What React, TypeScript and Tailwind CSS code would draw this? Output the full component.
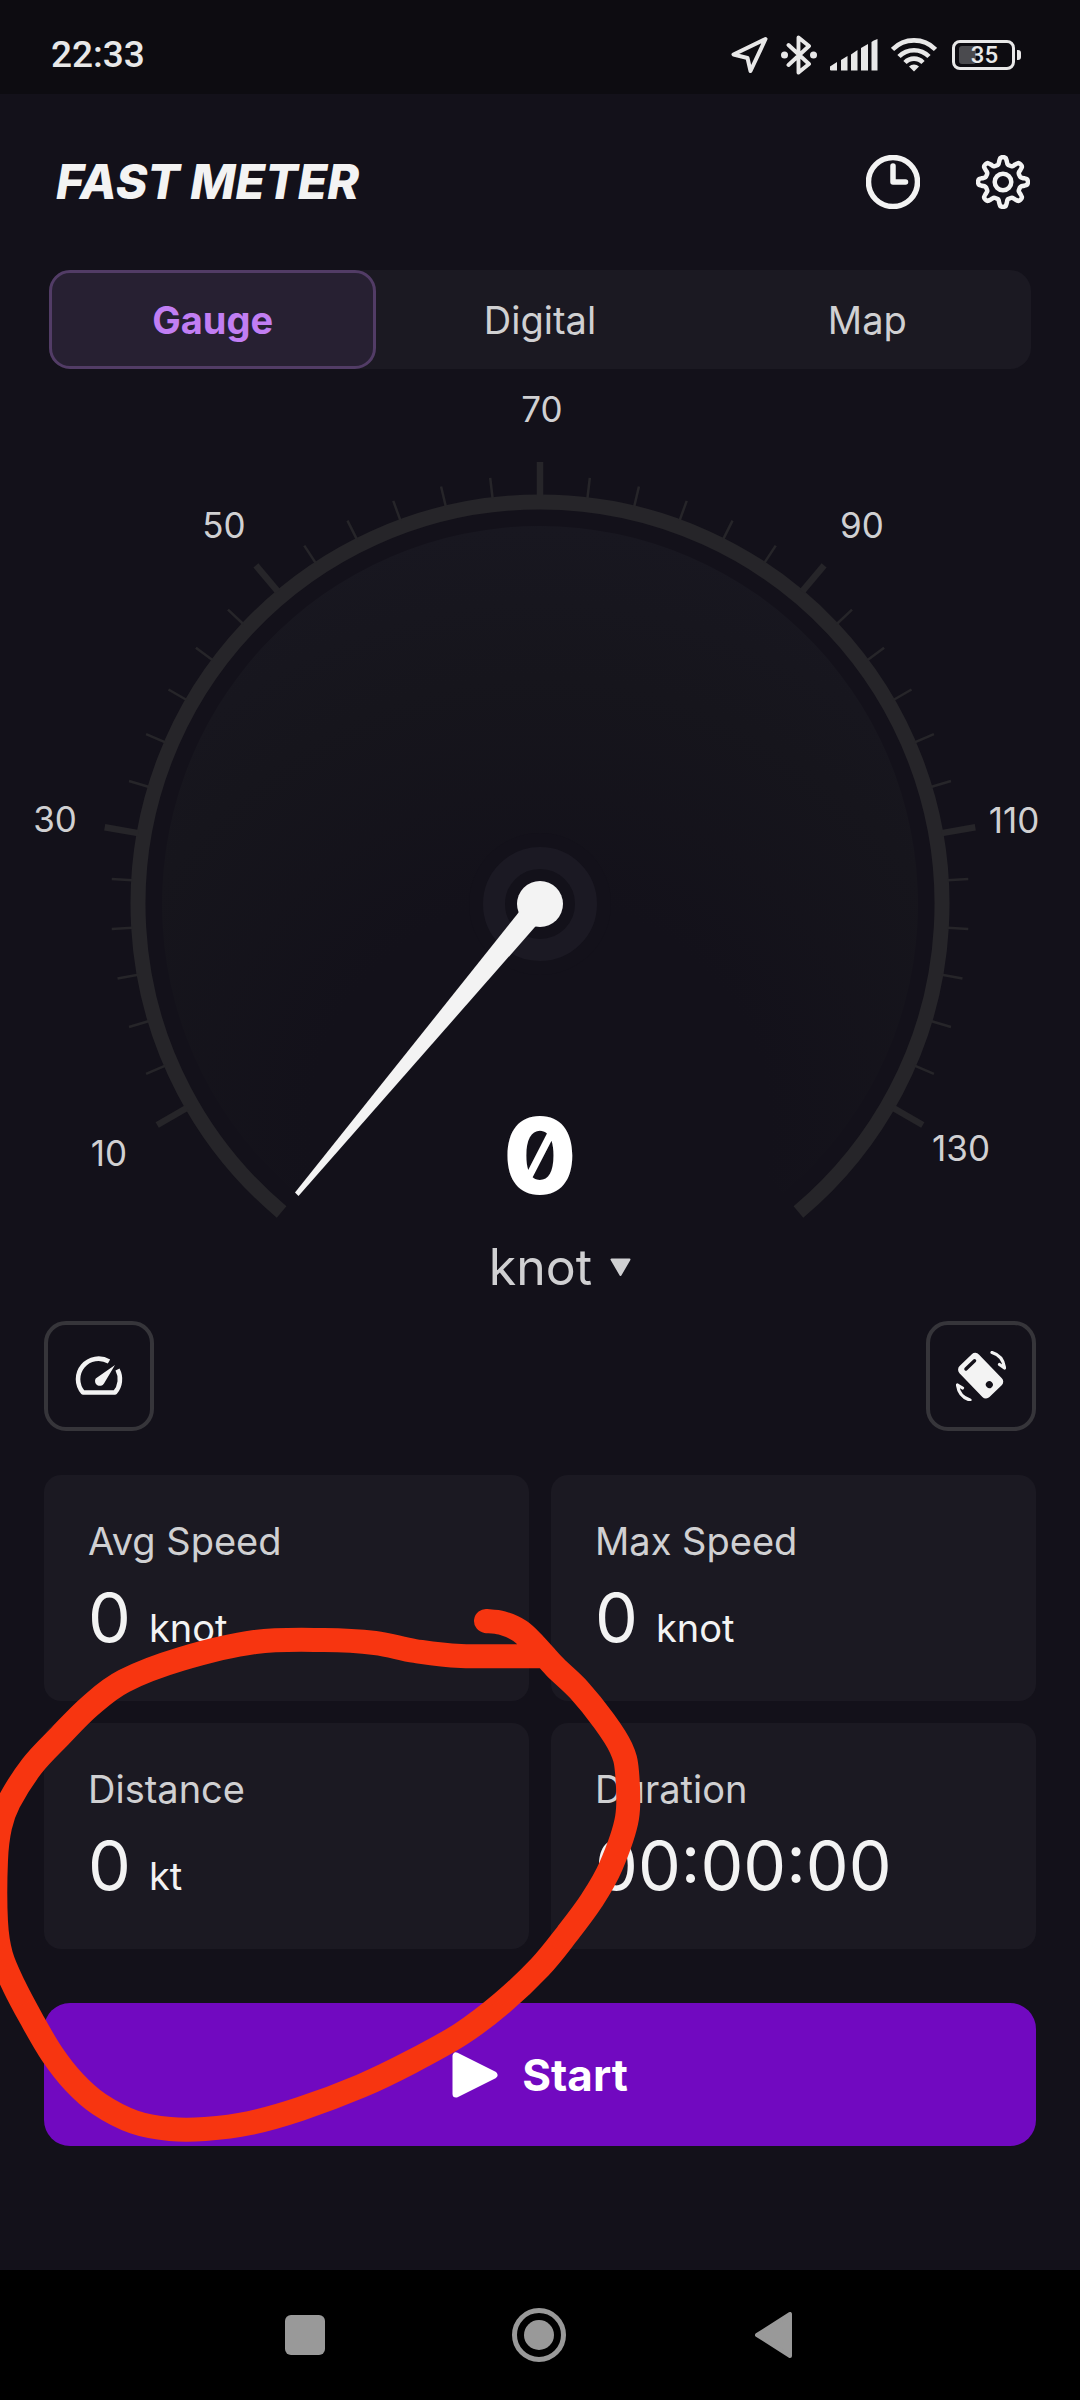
import React from "react";

const FONT = "font-['Inter',sans-serif]";

const CX = 540;
const CY = 904;

function polar(angle: number, radius: number) {
  const a = (angle * Math.PI) / 180;
  return { x: CX + radius * Math.sin(a), y: CY - radius * Math.cos(a) };
}

function arcPath(radius: number, from: number, to: number) {
  const a = polar(from, radius);
  const b = polar(to, radius);
  return `M${a.x} ${a.y}A${radius} ${radius} 0 1 1 ${b.x} ${b.y}`;
}

/* Smooth curve through a list of points. */
function smooth(points: number[][]) {
  let d = `M${points[0][0]} ${points[0][1]}`;
  for (let i = 0; i < points.length - 1; i++) {
    const p0 = points[Math.max(0, i - 1)];
    const p1 = points[i];
    const p2 = points[i + 1];
    const p3 = points[Math.min(points.length - 1, i + 2)];
    d += `C${p1[0] + (p2[0] - p0[0]) / 6} ${p1[1] + (p2[1] - p0[1]) / 6} ${p2[0] - (p3[0] - p1[0]) / 6} ${p2[1] - (p3[1] - p1[1]) / 6} ${p2[0]} ${p2[1]}`;
  }
  return d;
}

const TICKS = Array.from({ length: 37 }, (_, i) => ({
  angle: -120 + (i * 20) / 3,
  major: i % 6 === 0,
}));

const LABELS = [
  { text: "10", x: 109, y: 1166 },
  { text: "30", x: 55, y: 832 },
  { text: "50", x: 224, y: 538 },
  { text: "70", x: 542, y: 422 },
  { text: "90", x: 862, y: 538 },
  { text: "110", x: 1014, y: 833 },
  { text: "130", x: 961, y: 1161 },
];

const MARKER = [
  [486, 1621], [502, 1623], [520, 1631], [535, 1645], [555, 1667], [579, 1690],
  [604, 1721], [621, 1748], [627, 1772], [627, 1818], [611, 1866], [592, 1900],
  [567, 1934], [540, 1967], [502, 2003], [461, 2034], [411, 2062], [361, 2086],
  [300, 2109], [250, 2123], [205, 2129], [170, 2129], [134, 2122], [99, 2104],
  [74, 2082], [52, 2054], [32, 2020], [14, 1986], [1, 1955], [-4, 1922], [-4, 1860],
  [0, 1827], [9, 1802], [32, 1766], [60, 1736], [90, 1706], [124, 1681], [181, 1659],
  [255, 1642], [324, 1640], [375, 1643], [415, 1651], [461, 1656], [545, 1656],
];

function StatusBar() {
  return (
    <div className="flex h-[94px] items-center justify-between bg-[#0d0c11] pr-[59px] pl-[51px] pt-[15px]">
      <span className="font-['Roboto',sans-serif] text-[37px] leading-none font-medium text-[#e8e8e8]">22:33</span>
      <div className="flex items-center gap-[13px] text-[#e8e8e8]">
        <svg className="h-[38px] w-[37px]" viewBox="0 0 37 38" fill="none" stroke="currentColor" strokeWidth="4" strokeLinejoin="round" aria-label="Location">
          <path d="M34.500 3 2.500 18.500 16.500 22 19.500 35Z" />
        </svg>
        <svg className="h-[40px] w-[36px]" viewBox="0 0 36 40" fill="none" stroke="currentColor" strokeWidth="3.900" strokeLinecap="round" strokeLinejoin="round" aria-label="Bluetooth">
          <path d="M7.500 10 28 29 17.500 37.500V2.500L28 11 7.500 30" />
          <circle cx="3.500" cy="20" r="3.500" fill="currentColor" stroke="none" />
          <circle cx="32.500" cy="20" r="3.500" fill="currentColor" stroke="none" />
        </svg>
        <svg className="h-[32px] w-[48px]" viewBox="0 0 48 32" fill="currentColor" aria-label="Signal">
          <path d="M0 31v-3.500L7 23v8.500H1ZM11 31.500V21L17.500 17v14.500ZM21 31.500V15.500L27.500 11v20.500ZM31 31.500V9L38 5v26.500ZM41.500 31.500V3Q43 1.500 47.500 0v31.500Z" />
        </svg>
        <svg className="h-[34px] w-[46px]" viewBox="0 0 46 34" fill="none" stroke="currentColor" strokeWidth="4.600" aria-label="Wi-Fi">
          <path d="M1.500 11.500a30 30 0 0 1 43 0M8 18.500a21 21 0 0 1 30 0M14 24.500a12.500 12.500 0 0 1 18 0" />
          <path d="M18 28.500a7.500 7.500 0 0 1 10 0l-5 5Z" fill="currentColor" stroke="none" />
        </svg>
        <div className="ml-0.5 flex items-center gap-0.5">
          <div className="relative flex h-[30px] w-[63px] items-center justify-center rounded-[8px] border-[3px] border-current">
            <span className="absolute inset-y-[3px] left-1 w-[17px] rounded-[3px] bg-[#4a4a4e]" />
            <span className="relative pl-0.5 font-['Roboto',sans-serif] text-[24px] leading-none font-medium">35</span>
          </div>
          <span className="h-[10px] w-1 rounded-r-[3px] bg-current" />
        </div>
      </div>
    </div>
  );
}

function Header() {
  return (
    <header className="flex h-[176px] items-center justify-between pr-[50px] pl-[56px] text-[#f3f3f3]">
      <h1 className="text-[48px] leading-none font-extrabold italic">FAST METER</h1>
      <div className="flex items-center gap-[56px]">
        <button aria-label="History">
          <svg className="size-[54px]" viewBox="0 0 54 54" fill="none" stroke="currentColor" strokeWidth="5.500" strokeLinecap="round" strokeLinejoin="round">
            <circle cx="27" cy="27" r="24.500" />
            <path d="M27 11v16h12.500" />
          </svg>
        </button>
        <button aria-label="Settings">
          <svg className="size-[54px]" viewBox="0 0 54 54" fill="none" stroke="currentColor" strokeWidth="4.500" strokeLinejoin="round">
            <circle cx="27" cy="27" r="8.300" />
            <path d={GEAR} />
          </svg>
        </button>
      </div>
    </header>
  );
}

/* Eight-tooth gear outline, generated around (27, 27). */
const GEAR = (() => {
  const pts: number[][] = [];
  for (let i = 0; i <= 96; i++) {
    const t = (i / 96) * Math.PI * 2;
    const wave = Math.cos(8 * t);
    const r = 21.300 + 3.700 * Math.tanh(2 * wave);
    const skew = t - 0.020 * Math.sin(8 * t);
    pts.push([27 + r * Math.sin(skew), 27 - r * Math.cos(skew)]);
  }
  return smooth(pts) + "Z";
})();

function Tabs() {
  return (
    <nav className="mx-[49px] grid h-[99px] grid-cols-3 rounded-[21px] bg-[#1b1922] text-[38px] leading-none text-[#d0d0d2]">
      <button className="rounded-[21px] border-[3px] border-[#523c66] bg-[#272032] font-bold text-[#c17ef3]">Gauge</button>
      <button>Digital</button>
      <button>Map</button>
    </nav>
  );
}

function Gauge() {
  const left = polar(-140, 378);
  return (
    <svg className="block w-full" viewBox="0 369 1080 856" role="img" aria-label="Speed gauge">
      <defs>
        <radialGradient id="dial" gradientUnits="userSpaceOnUse" cx="540" cy="1130" r="604">
          <stop offset="0.38" stopColor="#13111a" />
          <stop offset="0.75" stopColor="#16151c" />
          <stop offset="1" stopColor="#181720" />
        </radialGradient>
      </defs>
      <path d={`${arcPath(378, -140, 140)}L${CX} ${CY}L${left.x} ${left.y}Z`} fill="url(#dial)" />
      <path d={arcPath(402, -140, 140)} fill="none" stroke="#262529" strokeWidth="15" />
      {TICKS.map((t) => {
        const a = polar(t.angle, 408);
        const b = polar(t.angle, t.major ? 442 : 429);
        return <line key={t.angle} x1={a.x} y1={a.y} x2={b.x} y2={b.y} stroke="#262529" strokeWidth={t.major ? 6.500 : 2.500} />;
      })}
      <g className="fill-[#d0d0d2] text-[35px]" textAnchor="middle">
        {LABELS.map((l) => (
          <text key={l.text} x={l.x} y={l.y}>{l.text}</text>
        ))}
      </g>
      <circle cx={CX} cy={CY} r="71" fill="#13111a" />
      <circle cx={CX} cy={CY} r="46" fill="none" stroke="#1b1923" strokeWidth="22" />
      <g fill="#f3f3f3">
        <path d="M531 897 295 1192.500l3.500 3.500L549 911Z" />
        <circle cx={CX} cy={CY} r="23" />
      </g>
      <text x={CX} y="1194" textAnchor="middle" className="fill-white text-[106px] font-extrabold slashed-zero">0</text>
    </svg>
  );
}

function UnitPicker() {
  return (
    <div className="flex h-[96px] items-center justify-center gap-[18px] pb-3 pl-[40px] text-[#d0d0d2]">
      <select aria-label="Speed unit" defaultValue="knot" className="field-sizing-content appearance-none bg-transparent text-[50px] leading-[60px]">
        <option>knot</option>
        <option>km/h</option>
        <option>mph</option>
      </select>
      <svg className="h-[18px] w-[21px]" viewBox="0 0 21 18" fill="currentColor" stroke="currentColor" strokeWidth="2" strokeLinejoin="round" aria-hidden="true">
        <path d="M1.500 1.500h18L10.500 17Z" />
      </svg>
    </div>
  );
}

function Tools() {
  const box = "flex size-[110px] items-center justify-center rounded-[22px] border-4 border-[#36353a] text-[#f3f3f3]";
  return (
    <div className="flex justify-between px-[44px]">
      <button className={box} aria-label="Speedometer style">
        <svg className="size-[50px]" viewBox="0 0 50 50" fill="none" stroke="currentColor" strokeWidth="4.600" strokeLinejoin="round">
          <path d="M35 10.500A20.500 20.500 0 0 0 9 41.500H41A20.500 20.500 0 0 0 43.500 18.500" />
          <path d="M41 14 30 32.500a4.800 4.800 0 1 1-8.300-5Z" fill="currentColor" stroke="none" />
        </svg>
      </button>
      <button className={box} aria-label="Rotate screen">
        <svg className="size-[50px]" viewBox="0 0 50 50" fill="none">
          <g transform="rotate(-44 25 25)">
            <rect x="11.500" y="3" width="27" height="43" rx="5" fill="currentColor" />
            <path d="M19 9.500h12" stroke="#13111a" strokeWidth="3.400" strokeLinecap="round" />
            <circle cx="25" cy="37" r="3.500" fill="#13111a" />
          </g>
          <path d="M36 1.500C43 3.500 47.500 8.500 48.500 17M48.500 17l-5-3.500M14 49C7 47 2.500 42 1.500 34M1.500 34l5 3" stroke="currentColor" strokeWidth="3.200" strokeLinecap="round" />
        </svg>
      </button>
    </div>
  );
}

function Stat({ label, value, unit }: { label: string; value: string; unit?: string }) {
  return (
    <div className="h-[226px] rounded-[17px] bg-[#1b1922] px-[44px] pt-[44px]">
      <dt className="text-[38px] leading-[44px] text-[#d0d0d2]">{label}</dt>
      <dd className="mt-3.5 flex items-baseline gap-[18px] text-[68px] leading-[80px] text-[#f3f3f3]">
        {value}
        {unit && <span className="text-[38px]">{unit}</span>}
      </dd>
    </div>
  );
}

function NavBar() {
  return (
    <nav className="mt-auto flex h-[130px] items-center justify-center gap-[180px] bg-black pr-0.5 text-[#999999]">
      <button aria-label="Recent apps" className="flex size-[54px] items-center justify-center">
        <span className="size-[40px] rounded-[6px] bg-current" />
      </button>
      <button aria-label="Home" className="flex size-[54px] items-center justify-center rounded-full border-[5px] border-current">
        <span className="size-[30px] rounded-full bg-current" />
      </button>
      <button aria-label="Back" className="flex size-[54px] items-center justify-center">
        <svg className="h-[46px] w-[37px]" viewBox="0 0 37 46" fill="currentColor" stroke="currentColor" strokeWidth="4" strokeLinejoin="round">
          <path d="M2 23 35 2v42Z" />
        </svg>
      </button>
    </nav>
  );
}

export default function App() {
  return (
    <div className={`relative flex min-h-screen flex-col overflow-hidden bg-[#13111a] ${FONT}`}>
      <StatusBar />
      <Header />
      <Tabs />
      <main>
        <Gauge />
        <UnitPicker />
        <Tools />
        <dl className="mt-[44px] grid grid-cols-2 gap-[22px] px-[44px]">
          <Stat label="Avg Speed" value="0" unit="knot" />
          <Stat label="Max Speed" value="0" unit="knot" />
          <Stat label="Distance" value="0" unit="kt" />
          <Stat label="Duration" value="00:00:00" />
        </dl>
        <div className="px-[44px] pt-[54px]">
          <button className="flex h-[143px] w-full items-center justify-center gap-[24px] rounded-[26px] bg-[#7109c0] text-[44px] leading-none font-bold text-white">
            <svg className="h-[46px] w-[46px]" viewBox="0 0 46 46" fill="currentColor" stroke="currentColor" strokeWidth="7" strokeLinejoin="round" aria-hidden="true">
              <path d="M4 4v38L42 23Z" />
            </svg>
            Start
          </button>
        </div>
      </main>
      <NavBar />
      <svg className="pointer-events-none absolute inset-x-0 top-0 w-full" viewBox="0 0 1080 2400" fill="none" aria-hidden="true">
        <path d={smooth(MARKER)} stroke="#f73510" strokeWidth="24" strokeLinecap="round" strokeLinejoin="round" />
      </svg>
    </div>
  );
}
